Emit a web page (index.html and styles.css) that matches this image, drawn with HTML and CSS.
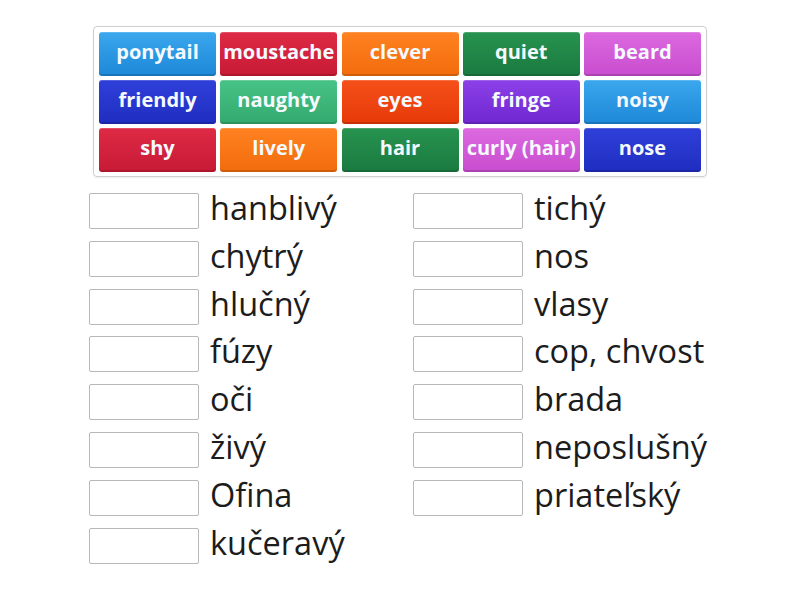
FILE: index.html
```html
<!DOCTYPE html>
<html lang="sk">
<head>
<meta charset="utf-8">
<link rel="stylesheet" href="styles.css">
</head>
<body>
<div class="page">
  <div class="bank">
    <div class="tile c-blue">ponytail</div>
    <div class="tile c-red">moustache</div>
    <div class="tile c-orange">clever</div>
    <div class="tile c-green">quiet</div>
    <div class="tile c-pink">beard</div>
    <div class="tile c-navy">friendly</div>
    <div class="tile c-teal">naughty</div>
    <div class="tile c-redorange">eyes</div>
    <div class="tile c-purple">fringe</div>
    <div class="tile c-blue">noisy</div>
    <div class="tile c-red">shy</div>
    <div class="tile c-orange">lively</div>
    <div class="tile c-green">hair</div>
    <div class="tile c-pink">curly (hair)</div>
    <div class="tile c-navy">nose</div>
  </div>
  <div class="answers">
    <div class="col">
      <div class="row"><span class="box"></span><span class="word">hanblivý</span></div>
      <div class="row"><span class="box"></span><span class="word">chytrý</span></div>
      <div class="row"><span class="box"></span><span class="word">hlučný</span></div>
      <div class="row"><span class="box"></span><span class="word">fúzy</span></div>
      <div class="row"><span class="box"></span><span class="word">oči</span></div>
      <div class="row"><span class="box"></span><span class="word">živý</span></div>
      <div class="row"><span class="box"></span><span class="word">Ofina</span></div>
      <div class="row"><span class="box"></span><span class="word">kučeravý</span></div>
    </div>
    <div class="col">
      <div class="row"><span class="box"></span><span class="word">tichý</span></div>
      <div class="row"><span class="box"></span><span class="word">nos</span></div>
      <div class="row"><span class="box"></span><span class="word">vlasy</span></div>
      <div class="row"><span class="box"></span><span class="word">cop, chvost</span></div>
      <div class="row"><span class="box"></span><span class="word">brada</span></div>
      <div class="row"><span class="box"></span><span class="word">neposlušný</span></div>
      <div class="row"><span class="box"></span><span class="word">priateľský</span></div>
    </div>
  </div>
</div>
</body>
</html>
```

FILE: styles.css
```css
html, body {
  margin: 0;
  padding: 0;
  background: #ffffff;
}

body {
  font-family: "Open Sans", "Noto Sans", sans-serif;
  width: 800px;
  height: 600px;
  overflow: hidden;
}

.page {
  padding-top: 26px;
}

.bank {
  width: 602px;
  margin: 0 auto;
  padding: 5px 5px 4px 5px;
  border: 1px solid #cfcfcf;
  border-radius: 4px;
  box-shadow: 0 1px 2px rgba(0, 0, 0, 0.08);
  display: grid;
  grid-template-columns: repeat(5, 117px);
  grid-auto-rows: 44px;
  column-gap: 4.25px;
  row-gap: 4px;
}

.tile {
  display: flex;
  align-items: center;
  justify-content: center;
  padding-bottom: 5px;
  box-sizing: border-box;
  border-radius: 3px;
  color: #f4faff;
  font-weight: 700;
  font-size: 20px;
  white-space: nowrap;
  box-shadow: inset 0 -2px 0 rgba(0, 0, 0, 0.14), inset 0 1px 0 rgba(255, 255, 255, 0.18);
}

.c-blue { background: linear-gradient(#3aa7ee, #1d88d8); }
.c-red { background: linear-gradient(#de2a45, #c71a35); }
.c-orange { background: linear-gradient(#ff8222, #f26c0c); }
.c-green { background: linear-gradient(#27934f, #1a7a40); }
.c-pink { background: linear-gradient(#dc6ae0, #c84ccf); }
.c-navy { background: linear-gradient(#2f40da, #1f2dbf); }
.c-teal { background: linear-gradient(#48c387, #33a96e); }
.c-redorange { background: linear-gradient(#f5501a, #e63a08); }
.c-purple { background: linear-gradient(#8c40e8, #6f27cf); }

.answers {
  display: grid;
  grid-template-columns: 324px 324px;
  padding-left: 89px;
  margin-top: 16px;
}

.col {
  display: flex;
  flex-direction: column;
  gap: 11.8px;
}

.row {
  display: flex;
  align-items: flex-start;
  gap: 11px;
  height: 36px;
}

.box {
  box-sizing: border-box;
  width: 110px;
  height: 36px;
  border: 1px solid #b8b8b8;
  border-radius: 2px;
  background: #ffffff;
  flex: none;
}

.word {
  font-size: 32.5px;
  line-height: 30px;
  color: #1c1c1c;
  white-space: nowrap;
}
```
